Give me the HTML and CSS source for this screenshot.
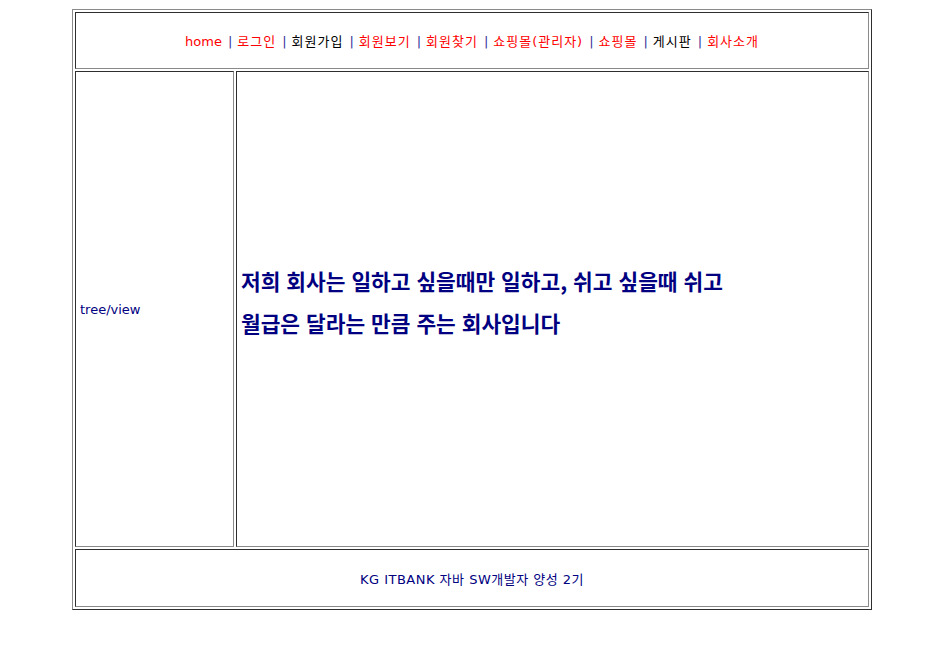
FILE: index.html
```html
<!DOCTYPE html>
<html lang="ko">
<head>
<meta charset="utf-8">
<title>회사소개</title>
<link rel="stylesheet" href="styles.css">
</head>
<body>
<table class="layout">
  <tr>
    <td colspan="2" class="cell top">
      <nav class="menu">
        <a class="red">home</a><span class="sep">|</span><a class="red ko">로그인</a><span class="sep">|</span><a class="plain ko">회원가입</a><span class="sep">|</span><a class="red ko">회원보기</a><span class="sep">|</span><a class="red ko">회원찾기</a><span class="sep">|</span><a class="red ko">쇼핑몰(관리자)</a><span class="sep">|</span><a class="red ko">쇼핑몰</a><span class="sep">|</span><a class="plain ko">게시판</a><span class="sep">|</span><a class="red ko">회사소개</a>
      </nav>
    </td>
  </tr>
  <tr>
    <td class="cell side">tree/view</td>
    <td class="cell main">
      <p class="intro">저희 회사는 일하고 싶을때만 일하고, 쉬고 싶을때 쉬고</p>
      <p class="intro">월급은 달라는 만큼 주는 회사입니다</p>
    </td>
  </tr>
  <tr>
    <td colspan="2" class="cell foot">KG ITBANK 자바 SW개발자 양성 2기</td>
  </tr>
</table>
</body>
</html>
```

FILE: styles.css
```css
html, body {
  background: #ffffff;
}
body {
  margin: 9px 0 0 72px;
  font-family: "DejaVu Sans", "Noto Sans CJK KR", sans-serif;
  font-size: 13px;
  color: #000000;
}
.layout {
  width: 800px;
  border-collapse: separate;
  border-spacing: 2px;
  border: 1px solid;
  border-color: #8a8a8a #2e2e2e #2e2e2e #8a8a8a;
}
.cell {
  box-sizing: border-box;
  border: 1px solid;
  border-color: #2e2e2e #8a8a8a #8a8a8a #2e2e2e;
  padding: 1px;
}
.top {
  height: 57px;
  text-align: center;
}
.menu {
  white-space: nowrap;
}
.menu a {
  text-decoration: none;
}
.ko {
  letter-spacing: 1px;
}
.red {
  color: #ff0000;
}
.plain {
  color: #000000;
}
.sep {
  color: #33339a;
  margin: 0 5px 0 6px;
}
.side {
  width: 159px;
  height: 476px;
  padding: 1px 4px 1px 4px;
  vertical-align: middle;
  color: #000080;
}
.main {
  width: 633px;
  vertical-align: middle;
  padding: 1px 4px 16px 4px;
}
.intro {
  margin: 0;
  font-family: "Noto Sans CJK KR", sans-serif;
  font-weight: bold;
  font-size: 21.4px;
  line-height: 42px;
  color: #000080;
  white-space: nowrap;
}
.foot {
  height: 58px;
  text-align: center;
  color: #000080;
  letter-spacing: 0.5px;
}
```
